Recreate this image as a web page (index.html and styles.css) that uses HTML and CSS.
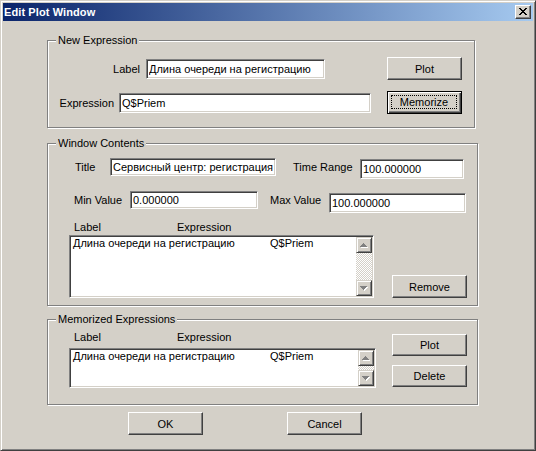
FILE: index.html
```html
<!DOCTYPE html>
<html lang="ru">
<head>
<meta charset="utf-8">
<title>Edit Plot Window</title>
<link rel="stylesheet" href="styles.css">
</head>
<body>
<div class="window">
  <div class="titlebar">
    <span class="caption">Edit Plot Window</span>
    <button class="close" aria-label="Close">
      <svg width="8" height="7" viewBox="0 0 8 7"><path d="M0 0h2v1H0zM6 0h2v1H6zM1 1h2v1H1zM5 1h2v1H5zM2 2h4v1H2zM3 3h2v1H3zM2 4h4v1H2zM1 5h2v1H1zM5 5h2v1H5zM0 6h2v1H0zM6 6h2v1H6z" fill="#000"/></svg>
    </button>
  </div>

  <div class="client">
    <section class="group g-new">
      <span class="legend">New Expression</span>
      <div class="row nr1">
        <span class="lbl lbl-label">Label</span>
        <input class="edit e-label" value="Длина очереди на регистрацию">
        <button class="btn b-plot">Plot</button>
      </div>
      <div class="row nr2">
        <span class="lbl lbl-expr">Expression</span>
        <input class="edit e-expr" value="Q$Priem">
        <button class="btn default b-memo"><span class="focus">Memorize</span></button>
      </div>
    </section>

    <section class="group g-win">
      <span class="legend">Window Contents</span>
      <div class="row wr1">
        <span class="lbl lbl-title">Title</span>
        <input class="edit e-title" value="Сервисный центр: регистрация">
        <span class="lbl lbl-range">Time Range</span>
        <input class="edit e-range" value="100.000000">
      </div>
      <div class="row wr2">
        <span class="lbl lbl-min">Min Value</span>
        <input class="edit e-min" value="0.000000">
        <span class="lbl lbl-max">Max Value</span>
        <input class="edit e-max" value="100.000000">
      </div>
      <div class="hdr wr-hdr"><span class="h-label">Label</span><span>Expression</span></div>
      <div class="row wr-list">
        <div class="list list-win">
          <div class="items">
            <div class="item"><span class="c1">Длина очереди на регистрацию</span><span>Q$Priem</span></div>
          </div>
          <div class="vscroll">
            <div class="sbtn"><svg width="8" height="5" viewBox="0 0 8 5"><path d="M4 1h1v1H4zM3 2h3v1H3zM2 3h5v1H2zM1 4h7v1H1z" fill="#fff"/><path d="M3 0h1v1H3zM2 1h3v1H2zM1 2h5v1H1zM0 3h7v1H0z" fill="#808080"/></svg></div>
            <div class="track"></div>
            <div class="sbtn"><svg width="8" height="5" viewBox="0 0 8 5"><path d="M1 1h7v1H1zM2 2h5v1H2zM3 3h3v1H3zM4 4h1v1H4z" fill="#fff"/><path d="M0 0h7v1H0zM1 1h5v1H1zM2 2h3v1H2zM3 3h1v1H3z" fill="#808080"/></svg></div>
          </div>
        </div>
        <button class="btn b-remove">Remove</button>
      </div>
    </section>

    <section class="group g-mem">
      <span class="legend">Memorized Expressions</span>
      <div class="mem-body">
        <div class="mem-left">
          <div class="hdr"><span class="h-label">Label</span><span>Expression</span></div>
          <div class="list list-mem">
            <div class="items">
              <div class="item"><span class="c1">Длина очереди на регистрацию</span><span>Q$Priem</span></div>
            </div>
            <div class="vscroll">
              <div class="sbtn"><svg width="8" height="5" viewBox="0 0 8 5"><path d="M4 1h1v1H4zM3 2h3v1H3zM2 3h5v1H2zM1 4h7v1H1z" fill="#fff"/><path d="M3 0h1v1H3zM2 1h3v1H2zM1 2h5v1H1zM0 3h7v1H0z" fill="#808080"/></svg></div>
              <div class="track"></div>
              <div class="sbtn"><svg width="8" height="5" viewBox="0 0 8 5"><path d="M1 1h7v1H1zM2 2h5v1H2zM3 3h3v1H3zM4 4h1v1H4z" fill="#fff"/><path d="M0 0h7v1H0zM1 1h5v1H1zM2 2h3v1H2zM3 3h1v1H3z" fill="#808080"/></svg></div>
            </div>
          </div>
        </div>
        <div class="mem-right">
          <button class="btn b-small">Plot</button>
          <button class="btn b-small">Delete</button>
        </div>
      </div>
    </section>

    <div class="footer">
      <button class="btn b-ok">OK</button>
      <button class="btn b-cancel">Cancel</button>
    </div>
  </div>
</div>
</body>
</html>
```

FILE: styles.css
```css
* {
  box-sizing: border-box;
}

body {
  margin: 0;
  background: #d4d0c8;
  font-family: "Liberation Sans", Arial, sans-serif;
  font-size: 11px;
  color: #000;
}

/* window frame */
.window {
  width: 536px;
  height: 451px;
  background: #d4d0c8;
  border: 1px solid;
  border-color: #d4d0c8 #404040 #404040 #d4d0c8;
  box-shadow: inset 1px 1px 0 #fff, inset -1px -1px 0 #808080;
  padding: 2px;
}

.titlebar {
  height: 18px;
  display: flex;
  align-items: center;
  justify-content: space-between;
  padding: 0 2px 0 1px;
  background: linear-gradient(to right, #0a246a, #a6caf0);
}

.caption {
  color: #fff;
  font-weight: bold;
  font-size: 11px;
  letter-spacing: 0.1px;
}

.close {
  width: 16px;
  height: 14px;
  padding: 0 1px 1px 0;
  display: flex;
  align-items: center;
  justify-content: center;
  background: #d4d0c8;
  border: 1px solid;
  border-color: #fff #404040 #404040 #fff;
  box-shadow: inset -1px -1px 0 #808080;
}

.close svg {
  display: block;
}

.client {
  padding: 19px 0 0 44px;
}

/* etched group boxes */
.group {
  position: relative;
  border: 1px solid #808080;
  box-shadow: inset 1px 1px 0 #fff, 1px 1px 0 #fff;
}

.legend {
  position: absolute;
  top: -7px;
  left: 8px;
  padding: 0 2px;
  line-height: 13px;
  background: #d4d0c8;
}

.g-new {
  width: 428px;
  height: 88px;
}

.g-win {
  width: 431px;
  height: 163px;
  margin-top: 15px;
}

.g-mem {
  width: 431px;
  height: 86px;
  margin-top: 13px;
}

.row {
  display: flex;
  align-items: center;
}

.lbl {
  white-space: nowrap;
  line-height: 18px;
}

/* sunken edit fields */
.edit {
  display: block;
  margin: 0;
  padding: 0 2px;
  font: inherit;
  color: #000;
  background: #fff;
  border: 1px solid;
  border-color: #808080 #fff #fff #808080;
  box-shadow: inset 1px 1px 0 #404040, inset -1px -1px 0 #d4d0c8;
  outline: none;
}

/* push buttons */
.btn {
  display: flex;
  align-items: center;
  justify-content: center;
  margin: 0;
  padding: 0;
  width: 75px;
  height: 23px;
  font: inherit;
  color: #000;
  background: #d4d0c8;
  border: 1px solid;
  border-color: #fff #404040 #404040 #fff;
  box-shadow: inset -1px -1px 0 #808080;
}

.btn.default {
  border: 1px solid #000;
  box-shadow: inset 1px 1px 0 #fff, inset -1px -1px 0 #404040, inset -2px -2px 0 #808080;
  padding: 3px 4px 4px 3px;
}

.focus {
  flex: 1;
  align-self: stretch;
  display: flex;
  align-items: center;
  justify-content: center;
  border: 1px dotted #000;
}

/* New Expression */
.nr1 {
  margin-top: 16px;
}

.nr2 {
  margin-top: 11px;
}

.lbl-label {
  width: 92px;
  text-align: right;
}

.e-label {
  margin-left: 6px;
  width: 179px;
  height: 20px;
}

.b-plot {
  margin-left: 62px;
}

.lbl-expr {
  width: 66px;
  text-align: right;
}

.e-expr {
  margin-left: 5px;
  width: 252px;
  height: 20px;
}

.b-memo {
  margin-left: 16px;
}

/* Window Contents */
.wr1,
.wr2 {
  align-items: flex-start;
}

.wr1 {
  margin-top: 14px;
}

.wr2 {
  margin-top: 12px;
}

.lbl-title {
  margin-left: 27px;
  width: 35px;
}

.e-title {
  width: 166px;
  height: 18px;
}

.lbl-range {
  margin-left: 17px;
  width: 67px;
}

.e-range {
  margin-top: 1px;
  width: 104px;
  height: 20px;
}

.lbl-min {
  margin-left: 26px;
  width: 56px;
}

.e-min {
  width: 128px;
  height: 18px;
}

.lbl-max {
  margin-left: 12px;
  width: 59px;
}

.e-max {
  margin-top: 2px;
  width: 137px;
  height: 20px;
}

.hdr {
  display: flex;
  line-height: 13px;
  padding-left: 26px;
}

.h-label {
  width: 103px;
}

.wr-hdr {
  margin-top: 8px;
}

.wr-list {
  margin-top: 1px;
  align-items: flex-end;
}

/* list boxes */
.list {
  display: flex;
  margin-left: 21px;
  background: #fff;
  border: 1px solid;
  border-color: #808080 #fff #fff #808080;
  box-shadow: inset 1px 1px 0 #404040, inset -1px -1px 0 #d4d0c8;
  padding: 1px;
}

.list-win {
  width: 305px;
  height: 63px;
}

.list-mem {
  margin-top: 4px;
  width: 307px;
  height: 40px;
}

.items {
  flex: 1;
  padding-left: 2px;
}

.item {
  display: flex;
  line-height: 13px;
  white-space: nowrap;
}

.c1 {
  width: 197px;
}

.vscroll {
  width: 16px;
  display: flex;
  flex-direction: column;
}

.sbtn {
  height: 16px;
  display: flex;
  align-items: center;
  justify-content: center;
  background: #d4d0c8;
  border: 1px solid;
  border-color: #d4d0c8 #404040 #404040 #d4d0c8;
  box-shadow: inset 1px 1px 0 #fff, inset -1px -1px 0 #808080;
}

.sbtn svg {
  display: block;
}

.track {
  flex: 1;
  background-image: repeating-conic-gradient(#fff 0 25%, #d4d0c8 0 50%);
  background-size: 2px 2px;
}

.b-remove {
  margin-left: 18px;
}

/* Memorized Expressions */
.mem-body {
  display: flex;
}

.mem-left {
  margin-top: 11px;
}

.mem-right {
  margin-left: 16px;
  margin-top: 14px;
  display: flex;
  flex-direction: column;
  gap: 9px;
}

.b-small {
  height: 22px;
}

/* dialog buttons */
.footer {
  display: flex;
  margin-top: 7px;
}

.b-ok {
  margin-left: 81px;
}

.b-cancel {
  margin-left: 84px;
}
```
